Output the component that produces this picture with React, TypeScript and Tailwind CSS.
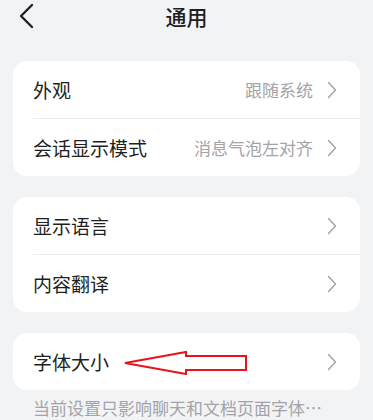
import React from "react";

const font = { fontFamily: '"Noto Sans CJK SC", "Noto Sans", sans-serif' };

function Chevron() {
  return (
    <svg width="10" height="18" viewBox="0 0 10 18" className="shrink-0">
      <path d="M1.5 1.5 L8.5 9 L1.5 16.5" fill="none" stroke="#a4a4a8" strokeWidth="1.5" strokeLinecap="round" strokeLinejoin="round" />
    </svg>
  );
}

function Row({ label, value, children }: { label: string; value?: string; children?: React.ReactNode }) {
  return (
    <div className="relative flex h-[57px] items-center pl-[20px] pr-[23px]">
      <span className="text-[19px] text-[#1f1f21] leading-none">{label}</span>
      {children}
      <div className="ml-auto flex items-center gap-[14px]">
        {value && <span className="text-[17px] text-[#a3a3a8] leading-none">{value}</span>}
        <Chevron />
      </div>
    </div>
  );
}

function Divider() {
  return <div className="ml-[20px] h-px bg-[#ececee]" />;
}

export default function App() {
  return (
    <div className="h-[420px] w-[373px] overflow-hidden bg-[#f2f3f5]" style={font}>
      <div className="relative flex h-[32px] items-center justify-center">
        <svg width="16" height="26" viewBox="0 0 16 26" className="absolute left-[19px] top-[3px]">
          <path d="M13 2 L2 13 L13 24" fill="none" stroke="#222" strokeWidth="2.4" strokeLinecap="round" strokeLinejoin="round" />
        </svg>
        <span className="text-[21px] font-medium text-[#1f1f21] leading-none">通用</span>
      </div>

      <div className="mt-[29px] flex flex-col gap-[21px] px-[13px]">
        <div className="rounded-[14px] bg-white">
          <Row label="外观" value="跟随系统" />
          <Divider />
          <Row label="会话显示模式" value="消息气泡左对齐" />
        </div>
        <div className="rounded-[14px] bg-white">
          <Row label="显示语言" />
          <Divider />
          <Row label="内容翻译" />
        </div>
        <div>
          <div className="relative rounded-[14px] bg-white">
            <Row label="字体大小">
              <svg width="130" height="30" viewBox="0 0 130 30" className="absolute left-[110px] top-[12px]">
                <polygon
                  points="2,19 63,8 63,12 123,12 123,26 63,26 63,30"
                  transform="translate(0,-1)"
                  fill="none"
                  stroke="#e8131c"
                  strokeWidth="2"
                  strokeLinejoin="miter"
                />
              </svg>
            </Row>
          </div>
          <div className="mt-[8px] pl-[20px] text-[17px] leading-[20px] text-[#a3a3a8] whitespace-nowrap">
            当前设置只影响聊天和文档页面字体…
          </div>
        </div>
      </div>
    </div>
  );
}
